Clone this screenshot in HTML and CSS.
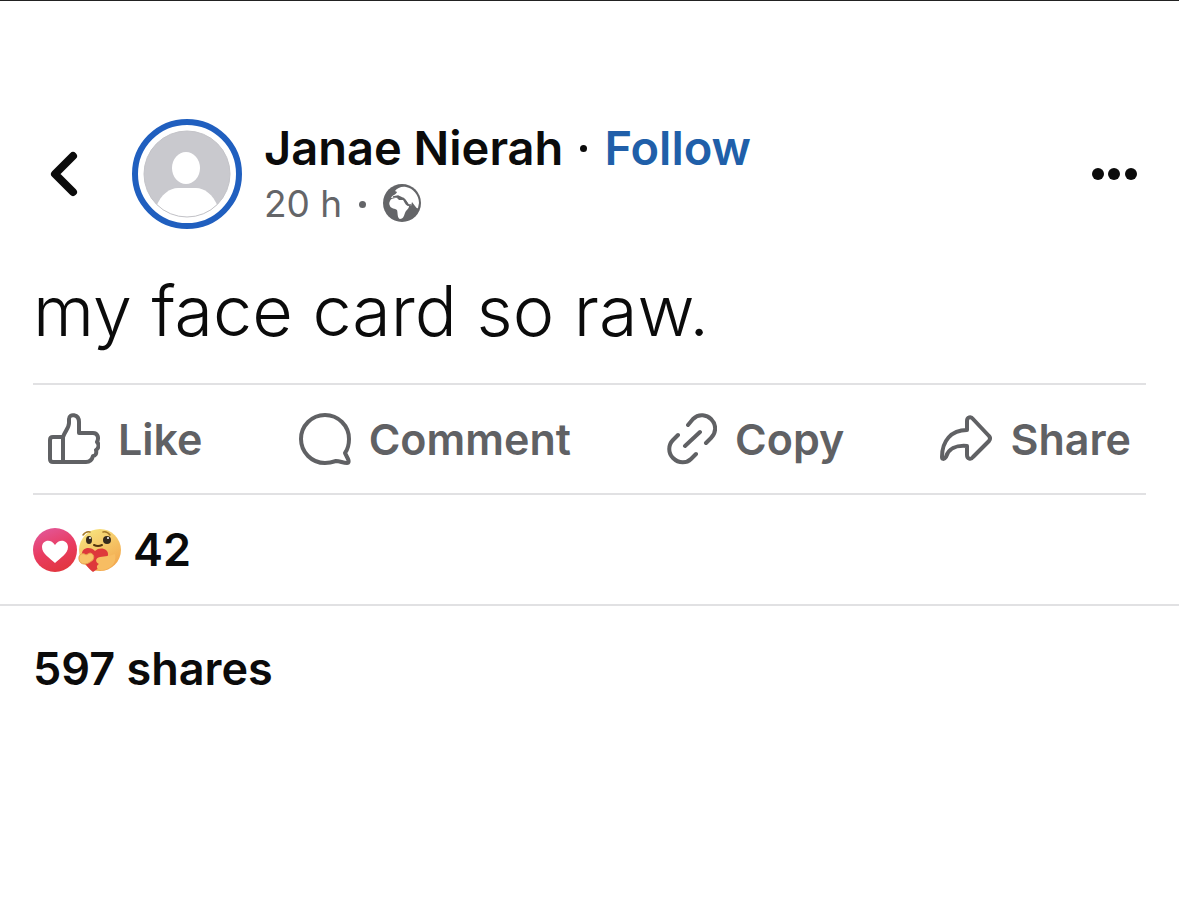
FILE: index.html
```html
<!DOCTYPE html>
<html lang="en">
<head>
  <meta charset="UTF-8">
  <meta name="viewport" content="width=device-width, initial-scale=1">
  <title>Janae Nierah</title>
  <link rel="stylesheet" href="styles.css">
</head>
<body>

  <article class="post">
    <header class="post-header">
      <button class="icon-button" type="button" aria-label="Back">
        <svg width="28" height="46" viewBox="0 0 28 46" fill="none" stroke="#0b0b0b" stroke-width="8" stroke-linecap="round" stroke-linejoin="round">
          <path d="M23 5 5 23 23 41"/>
        </svg>
      </button>

      <a class="avatar" href="#" aria-label="Profile picture">
        <svg width="88" height="88" viewBox="0 0 88 88">
          <clipPath id="face"><circle cx="44" cy="44" r="43"/></clipPath>
          <circle cx="44" cy="44" r="43" fill="#c9c9ce"/>
          <g fill="#fff" clip-path="url(#face)">
            <ellipse cx="43" cy="38" rx="14" ry="16"/>
            <path d="M13 77C18 64 27 58 35 58H53C61 58 70 64 75 77V88H13Z"/>
          </g>
          <circle cx="44" cy="44" r="43" fill="none" stroke="#c3c3c8"/>
        </svg>
      </a>

      <div class="author">
        <div class="author-line">
          <h1>Janae Nierah</h1>
          <span class="dot"></span>
          <button class="follow" type="button">Follow</button>
        </div>
        <div class="time-line">
          <span>20 h</span>
          <span class="dot"></span>
          <svg class="globe" width="38" height="38" viewBox="0 0 38 38">
            <circle cx="19" cy="19" r="19" fill="#646568"/>
            <path fill="#fff" d="M12 7C14 4 19 2 23 3C30 4 36 11 36 19L35 24C34 25 33 23 32 22L29 18L28 22C25 21 24 16 21 15C19 13 17 13 15 13L8 14C9 11 13 11 14 8Z"/>
            <path fill="#fff" d="M7 17C8 14 12 14 14 14L16 16L20 16C22 19 23 22 26 22C26 25 23 26 22 29C21 32 20 35 17 35C14 34 15 29 14 26C12 24 8 25 7 22C6 20 6 19 7 17Z"/>
            <path fill="none" stroke="#646568" stroke-width="1.5" d="M10 13 15 12 19 14C22 14 23 18 25 21L28 21"/>
          </svg>
        </div>
      </div>

      <button class="icon-button more" type="button" aria-label="More options">
        <svg width="46" height="12" viewBox="0 0 46 12" fill="#0b0b0b">
          <circle cx="7" cy="6" r="6"/>
          <circle cx="23" cy="6" r="6"/>
          <circle cx="40" cy="6" r="6"/>
        </svg>
      </button>
    </header>

    <p class="post-text">my face card so raw.</p>

    <div class="actions">
      <button type="button">
        <svg width="52" height="52" viewBox="0 0 52 52">
          <path d="M5 24H15V49H5Q2 49 2 46V27Q2 24 5 24ZM15 24C17 18 21 15 21 10V6C21 0 31 1 31 9V20H45C50 20 51 25 49 29C52 32 50 36 48 37C49 41 47 43 45 43C44 47 42 49 38 49H15"/>
        </svg>
        Like
      </button>
      <button type="button">
        <svg width="52" height="52" viewBox="0 0 52 52">
          <path d="M48 50C50 50 50 48 49 46L46 40C49 36 50 31 50 26A24 24 0 1 0 26 50C31 50 34 49 37 48C41 48 44 50 48 50Z"/>
        </svg>
        Comment
      </button>
      <button type="button">
        <svg width="50" height="52" viewBox="0 0 50 52" stroke-linecap="round">
          <path d="M21 12 26 6C32 0 40 2 44 6C50 12 49 20 44 25L39 30M18 33 33 19M11 22 6 27C1 32 1 40 6 45C12 51 20 50 24 46L29 41"/>
        </svg>
        Copy
      </button>
      <button type="button">
        <svg width="52" height="52" viewBox="0 0 52 52">
          <path d="M27 17V8C27 4 31 3 33 6L49 23Q51 25 49 28L33 44C31 47 27 46 27 42V33C16 32 8 36 6 44C4 47 2 46 2 44C2 28 11 17 27 17Z"/>
        </svg>
        Share
      </button>
    </div>

    <div class="reactions">
      <svg width="44" height="44" viewBox="0 0 44 44">
        <defs>
          <linearGradient id="love" x1="0.2" y1="0" x2="0.6" y2="1">
            <stop offset="0" stop-color="#e2589a"/>
            <stop offset="0.5" stop-color="#e93d63"/>
            <stop offset="1" stop-color="#e2363f"/>
          </linearGradient>
        </defs>
        <circle cx="22" cy="22" r="22" fill="url(#love)"/>
        <path fill="#fff" d="M22 35C17 30 9 26 9 19C9 12 18 10 22 17C26 10 35 12 35 19C35 26 27 30 22 35Z"/>
      </svg>
      <svg width="44" height="44" viewBox="0 0 44 44">
        <defs>
          <linearGradient id="care" x1="0" y1="0" x2="0.6" y2="1">
            <stop offset="0" stop-color="#f8ea83"/>
            <stop offset="1" stop-color="#f3a94f"/>
          </linearGradient>
        </defs>
        <circle cx="23" cy="22" r="21" fill="url(#care)"/>
        <path d="M6 7Q9 3 13 4M26 4Q30 3 33 7" fill="none" stroke="#a5792b" stroke-width="1.5" stroke-linecap="round"/>
        <ellipse cx="12" cy="12" rx="3" ry="4" fill="#352a1d"/>
        <ellipse cx="30" cy="12" rx="4" ry="4" fill="#352a1d"/>
        <circle cx="13" cy="10" r="1" fill="#fff"/>
        <circle cx="31" cy="10" r="1" fill="#fff"/>
        <path d="M17 17Q21 19 25 17" fill="none" stroke="#54340f" stroke-width="2" stroke-linecap="round"/>
        <path fill="#de383b" d="M16 44C11 40 6 34 5 27C4 19 14 18 18 23C23 18 32 21 31 27C29 34 22 40 16 44Z"/>
        <path fill="#f8c469" stroke="#e8a050" d="M2 29C3 25 7 25 9 27L13 25C18 26 18 32 13 34C8 38 1 36 2 29Z"/>
        <path fill="#f7bd62" d="M38 26C33 28 28 28 23 29C18 30 18 34 22 36C18 38 20 43 26 42C34 41 40 35 38 26Z"/>
      </svg>
      <a href="#">42</a>
    </div>

    <div class="shares">
      <a href="#">597 shares</a>
    </div>
  </article>

</body>
</html>
```
FILE: styles.css
```css
* {
  box-sizing: border-box;
}

body {
  margin: 0;
  border-top: 1px solid #222;
  background: #fff;
  color: #0b0b0b;
  font-family: Inter, "Liberation Sans", sans-serif;
}

button {
  padding: 0;
  border: none;
  background: none;
  color: inherit;
  font: inherit;
  cursor: pointer;
}

a {
  color: inherit;
  text-decoration: none;
}

svg {
  display: block;
  flex: none;
}

.post {
  padding-top: 116px;
}

.post-header {
  display: flex;
  align-items: center;
  padding: 0 42px 0 50px;
}

.avatar {
  display: flex;
  align-items: center;
  justify-content: center;
  width: 110px;
  height: 110px;
  margin: 0 22px 0 54px;
  border: 6px solid #205fbf;
  border-radius: 50%;
}

.author {
  padding-top: 2px;
}

.author-line,
.time-line {
  display: flex;
  align-items: center;
  height: 56px;
}

.author-line {
  font-size: 47px;
  font-weight: 600;
}

.author-line h1 {
  margin: 0;
  font-size: inherit;
  font-weight: inherit;
}

.dot {
  width: 7px;
  height: 7px;
  margin: 3px 17px 0;
  border-radius: 50%;
  background: currentColor;
}

.follow {
  color: #205fa9;
}

.time-line {
  color: #646568;
  font-size: 37px;
}

.more {
  margin-left: auto;
}

.post-text {
  margin: 0;
  padding: 32px 33px 24px;
  font-size: 70px;
  font-weight: 300;
  line-height: 96px;
}

.actions {
  display: flex;
  align-items: center;
  justify-content: space-between;
  height: 112px;
  margin: 0 33px;
  padding: 0 15px;
  border-top: 2px solid #e1e1e3;
  border-bottom: 2px solid #e1e1e3;
}

.actions button {
  display: flex;
  align-items: center;
  gap: 18px;
  color: #606164;
  font-size: 43px;
  font-weight: 600;
}

.actions svg {
  fill: none;
  stroke: currentColor;
  stroke-width: 4;
  stroke-linejoin: round;
}

.reactions,
.shares {
  display: flex;
  align-items: center;
  padding: 0 33px;
  font-size: 45px;
  font-weight: 600;
}

.reactions {
  height: 111px;
  border-bottom: 2px solid #e1e1e3;
}

.reactions a {
  margin-left: 12px;
}

.shares {
  height: 124px;
}
```
